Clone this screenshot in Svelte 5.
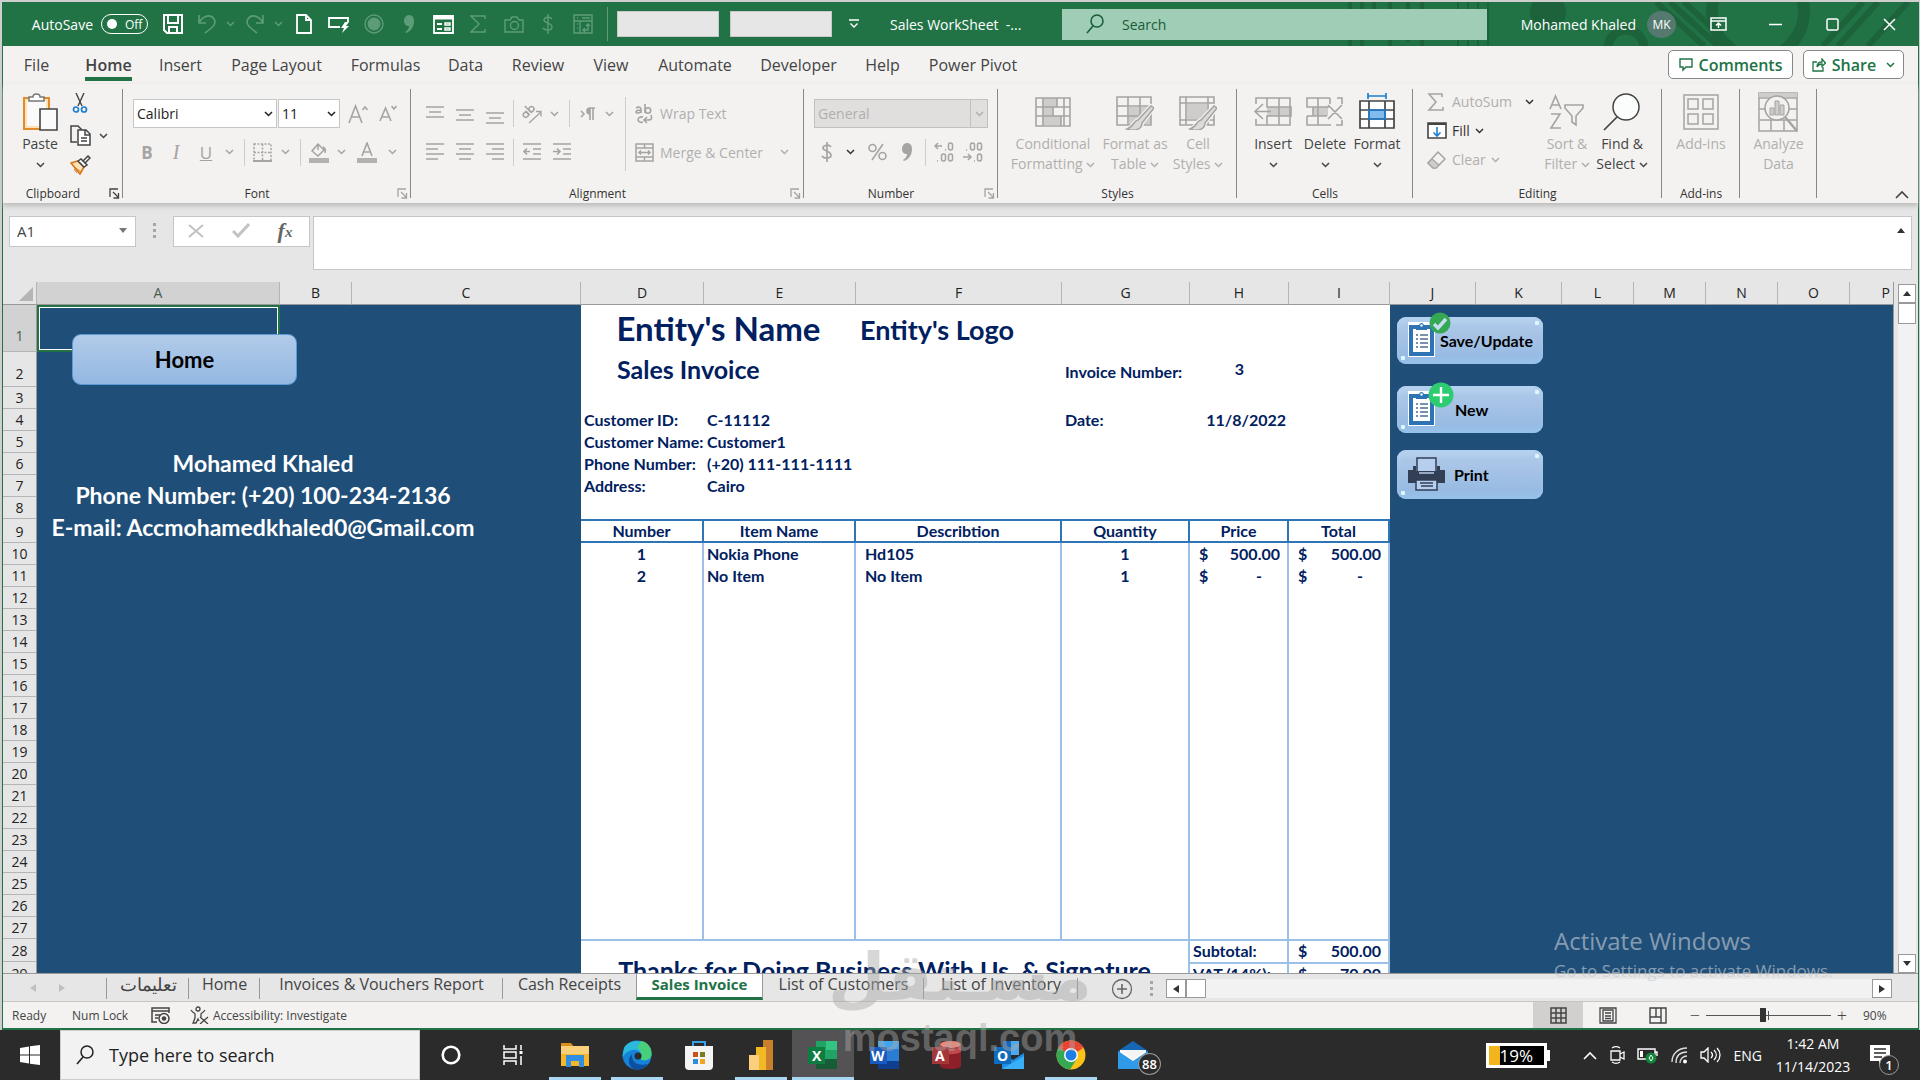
<script>
  const g = '#a6a4a2';
  const k = '#444';
  const w = '#fff';
  const dim = '#5d9c78';

  const icons = {
    save: [20, 20, `<g fill="none" stroke="${w}" stroke-width="2"><path d="M1 1h18v18H4l-3-3zM5 1v8h10V1M6 19v-6h8v6"/></g>`],
    undo: [18, 20, `<g fill="none" stroke="${dim}" stroke-width="1.6"><path d="M1 1v8h7M1 9C5 1 13 0 16 5s-1 8-9 14"/></g>`],
    redo: [18, 20, `<g fill="none" stroke="${dim}" stroke-width="1.6"><path d="M17 1v8h-7M17 9C13 1 5 0 2 5s1 8 9 14"/></g>`],
    page: [16, 20, `<path d="M1 1h9l5 5v13H1zM10 1v5h5" fill="none" stroke="${w}" stroke-width="1.8"/>`],
    touch: [22, 18, `<path d="M12 12H1V3h19v4" fill="none" stroke="${w}" stroke-width="1.8"/><path d="M17 7h4l-3 4h3l-7 7 2-5h-3z" fill="${w}"/>`],
    record: [20, 20, `<circle cx="10" cy="10" r="9" fill="none" stroke="${dim}" stroke-width="1.4"/><circle cx="10" cy="10" r="6.5" fill="${dim}"/>`],
    comma: [12, 18, `<path d="M6 0c3 0 5 2 5 6 0 6-3 10-8 12l-1-1c3-2 4-4 4-6-3 0-5-2-5-5s2-6 5-6z" fill="${dim}"/>`],
    form: [21, 19, `<path d="M1 1h19v17H1z" fill="none" stroke="${w}" stroke-width="1.8"/><path d="M1 3h19" stroke="${w}" stroke-width="3"/><path d="M4 9h5M4 14h5" stroke="${w}" stroke-width="2"/><path d="M12 8h5v2h-5zM12 13h5v2h-5z" fill="none" stroke="${w}" stroke-width="1.4"/>`],
    sigmaDim: [16, 18, `<path d="M15 4V1H1l8 8-8 8h14v-3" fill="none" stroke="${dim}" stroke-width="1.4"/>`],
    camera: [20, 17, `<path d="M1 4h5l2-3h5l2 3h4v12H1z" fill="none" stroke="${dim}" stroke-width="1.4"/><circle cx="10.500" cy="9.500" r="4" fill="none" stroke="${dim}" stroke-width="1.400"/>`],
    dollarDim: [12, 20, `<path d="M10 5C8 2 2 3 2 6s8 3 8 7-7 4-9 1M6 0v20" fill="none" stroke="${dim}" stroke-width="1.4"/>`],
    pivotDim: [20, 20, `<path d="M1 1h18v18H1zM7 7v12M1 7h18M4 4h1M4 10h1M4 14h1M9 4h8M15 10v6h-5M12 14l-2 2 2 2M13 12l2-2 2 2" fill="none" stroke="${dim}" stroke-width="1.4"/>`],
    qat: [10, 10, `<path d="M0 1h10M1.500 4.500L5 8l3.500-3.500" fill="none" stroke="${w}" stroke-width="1.4"/>`],
    loupe: [18, 20, `<circle cx="11" cy="7" r="6" fill="none" stroke="currentColor" stroke-width="1.5"/><path d="M7 12l-6 7" stroke="currentColor" stroke-width="1.6"/>`],
    ribbonMode: [17, 14, `<path d="M1 1h15v12H1zM1 4h15M8.500 11V6M6 8.500L8.500 6 11 8.500" fill="none" stroke="${w}" stroke-width="1.500"/>`],
    min: [13, 13, `<path d="M0 6.500h13" stroke="${w}" stroke-width="1.500"/>`],
    max: [13, 13, `<rect x="1" y="1" width="11" height="11" rx="1.500" fill="none" stroke="${w}" stroke-width="1.500"/>`],
    close: [13, 13, `<path d="M1 1l11 11M12 1L1 12" stroke="${w}" stroke-width="1.500"/>`],
    bubble: [14, 14, `<path d="M1 1h12v8H7l-3 3V9H1z" fill="none" stroke="#217346" stroke-width="1.400"/>`],
    share: [14, 14, `<path d="M5 4H1v9h10V9M5 9c0-4 2-5 5-5V1l3.500 4L10 8.500V6C8 6 6 7 5 9z" fill="none" stroke="#217346" stroke-width="1.300"/>`],
    paste: [36, 38, `<path d="M2 5h25v31H2z" fill="#fbe3b5" stroke="#e08b2c" stroke-width="2"/><path d="M5 8h19v25H5z" fill="#fafafa"/><path d="M7 8V4h4c0-4 7-4 7 0h4v4z" fill="#fff" stroke="#777" stroke-width="1.500"/><path d="M18 16h17v21H18z" fill="#fafafa" stroke="#444" stroke-width="1.600"/>`],
    cut: [16, 20, `<path d="M4 0l6 13M12 0L6 13" stroke="${k}" stroke-width="1.400"/><g fill="none" stroke="#1e7fd0" stroke-width="1.700"><circle cx="4" cy="16.500" r="2.500"/><circle cx="12" cy="16.500" r="2.500"/></g>`],
    copy: [21, 21, `<path d="M7 17H1V1h7l4 4" fill="none" stroke="${k}" stroke-width="1.500"/><path d="M8 5h8l4 4v11H8zM15 5v5h5M11 13h6M11 16h6" fill="#fff" stroke="${k}" stroke-width="1.500"/>`],
    painter: [21, 20, `<path d="M1 8l7-2 6 6-4 7z" fill="#fbe3b5" stroke="#d9791b" stroke-width="1.700"/><path d="M4 14l3 4M3 11l8 6" stroke="#d9791b"/><path d="M8 6l3-2 6 6-3 2zM13 6l5-5 2 2-5 5" fill="#fff" stroke="${k}" stroke-width="1.500"/>`],
    growA: [20, 20, `<path d="M1 19L7.500 2 14 19M3.500 13h8M14.500 6L17 3l2.500 3" fill="none" stroke="${g}" stroke-width="1.600"/>`],
    shrinkA: [18, 17, `<path d="M1 16L6.500 3 12 16M3 12h7M12.500 1L15 4l2.500-3" fill="none" stroke="${g}" stroke-width="1.600"/>`],
    borders: [19, 19, `<path d="M1 1h17v17H1zM9.500 1v17M1 9.500h17" fill="none" stroke="${g}" stroke-width="1.500" stroke-dasharray="2 1.500"/><path d="M0 18h19" stroke="${g}" stroke-width="2"/>`],
    fillc: [20, 21, `<path d="M9 2L3 9l6 5 6-6zM9 2v6M14 5c2 1 3 3 2 6" fill="none" stroke="${g}" stroke-width="1.500"/><path d="M0 16h20v5H0z" fill="#b3b1af"/>`],
    fontc: [20, 21, `<path d="M5 14L10 1l5 13M7 10h6" fill="none" stroke="${g}" stroke-width="1.600"/><path d="M0 16h20v5H0z" fill="#b3b1af"/>`],
    top: [18, 18, `<path d="M0 2h18M3 7h12M0 12h18" stroke="${g}" stroke-width="1.600"/>`],
    middle: [18, 18, `<path d="M0 5h18M3 10h12M0 15h18" stroke="${g}" stroke-width="1.600"/>`],
    bottom: [18, 22, `<path d="M0 10h18M3 15h12M0 20h18" stroke="${g}" stroke-width="1.600"/>`],
    left: [18, 18, `<path d="M0 1h18M0 6h12M0 11h18M0 16h12" stroke="${g}" stroke-width="1.600"/>`],
    center: [18, 18, `<path d="M0 1h18M3 6h12M0 11h18M3 16h12" stroke="${g}" stroke-width="1.600"/>`],
    right: [18, 18, `<path d="M0 1h18M6 6h12M0 11h18M6 16h12" stroke="${g}" stroke-width="1.600"/>`],
    outdent: [18, 18, `<path d="M0 1h18M10 6h8M10 11h8M0 16h18M7 8.500H1M4 5.500l-3 3 3 3" fill="none" stroke="${g}" stroke-width="1.600"/>`],
    indent: [18, 18, `<path d="M0 1h18M10 6h8M10 11h8M0 16h18M0 8.500h7M4 5.500l3 3-3 3" fill="none" stroke="${g}" stroke-width="1.600"/>`],
    orient: [20, 20, `<g transform="rotate(-45 7 9)" fill="none" stroke="${g}" stroke-width="1.500"><circle cx="3.500" cy="8" r="2.500"/><path d="M6 5v6M9 1v10"/><circle cx="11.500" cy="8" r="2.500"/></g><path d="M7 19L19 8M14 7.500h5v5" fill="none" stroke="${g}" stroke-width="1.300"/>`],
    para: [16, 14, `<path d="M1 4l3 3-3 3M10 13V1h5M13 1v12M10 7C6 7 6 1 10 1" fill="none" stroke="${g}" stroke-width="1.600"/><path d="M10 1v6C6 7 6 1 10 1z" fill="${g}"/>`],
    wrap: [18, 20, `<g fill="none" stroke="${g}" stroke-width="1.600"><path d="M1 4c4-2 5 0 5 1v4M6 6C0 6 0 9 3 9s3-2 3-3M10 0v9M8 18c-6 2-7-6 0-5"/><circle cx="13" cy="6.500" r="2.700"/><path d="M16 11c2 6-2 5-6 5M12 13l-3 3 3 3"/></g>`],
    merge: [19, 19, `<path d="M1 1h17v17H1zM1 5h17M1 14h17M9.500 1v4M9.500 14v4M4 9.500h11M6 7.500l-2 2 2 2M13 7.500l2 2-2 2" fill="none" stroke="${g}" stroke-width="1.500"/>`],
    dollar: [12, 20, `<path d="M10 5C8 2 2 3 2 6s8 3 8 7-7 4-9 1M6 0v20" fill="none" stroke="${g}" stroke-width="1.700"/>`],
    percent: [19, 18, `<g fill="none" stroke="${g}" stroke-width="1.600"><circle cx="4.500" cy="5" r="3.500"/><circle cx="14.500" cy="13" r="3.500"/><path d="M15 1L4 17"/></g>`],
    commaG: [12, 18, `<path d="M6 0c3 0 5 2 5 6 0 6-3 10-8 12l-1-1c3-2 4-4 4-6-3 0-5-2-5-5s2-6 5-6z" fill="${g}"/>`],
    incdec: [20, 20, `<g fill="none" stroke="${g}" stroke-width="1.500"><path d="M8 4H1M4 1L1 4l3 3M11 8h1"/><rect x="14.500" y="1" width="4" height="7" rx="2"/><path d="M3 19h1"/><rect x="7.500" y="12" width="4" height="7" rx="2"/><rect x="14.500" y="12" width="4" height="7" rx="2"/></g>`],
    decdec: [20, 20, `<g fill="none" stroke="${g}" stroke-width="1.500"><path d="M0 15h8M5 12l3 3-3 3M3 8h1M11 19h1"/><rect x="7.500" y="1" width="4" height="7" rx="2"/><rect x="14.500" y="1" width="4" height="7" rx="2"/><rect x="14.500" y="12" width="4" height="7" rx="2"/></g>`],
    cond: [36, 36, `<path d="M8 4h14v9H8zM8 13h10v9H8zM8 22h18v9H8z" fill="#cfcdcb"/><path d="M1 4h34v28H1zM8 4v28M29 4v28M1 13h34M1 22h34M8 13h14V4M18 13v9M8 22h18v10" fill="none" stroke="${g}" stroke-width="1.600"/>`],
    fmtTable: [38, 36, `<path d="M13 13h22v17H13z" fill="#cfcdcb"/><path d="M1 3h34v28H1zM1 12h34M1 22h34M12 3v28M24 3v28" fill="none" stroke="${g}" stroke-width="1.600"/><path d="M35 12L22 26c-5 1-4 7-11 9 8 3 15 0 15-6L38 14z" fill="#e8e6e4" stroke="#f3f2f1" stroke-width="4"/><path d="M35 12L22 26c-5 1-4 7-11 9 8 3 15 0 15-6L38 14z" fill="#dddbd9" stroke="${g}" stroke-width="1.500"/>`],
    cellStyle: [38, 36, `<path d="M8 10h20v15H8z" fill="#cfcdcb"/><path d="M1 3h34v28H1zM1 9h34M1 26h34M7 3v28M29 3v28" fill="none" stroke="${g}" stroke-width="1.600"/><path d="M35 12L22 26c-5 1-4 7-11 9 8 3 15 0 15-6L38 14z" fill="#e8e6e4" stroke="#f3f2f1" stroke-width="4"/><path d="M35 12L22 26c-5 1-4 7-11 9 8 3 15 0 15-6L38 14z" fill="#dddbd9" stroke="${g}" stroke-width="1.500"/>`],
    insertC: [40, 36, `<path d="M14 13h24v9H14z" fill="#cfcdcb"/><path d="M3 10V4h34v27H3v-6M14 4v9h24v9H14v9M26 4v27M14 31V22M14 9v4M10 10l-8 7.500 8 7.500M2 17.500h16" fill="none" stroke="${g}" stroke-width="1.600"/>`],
    deleteC: [38, 36, `<path d="M7 13h15v9H7z" fill="#cfcdcb"/><path d="M24 4H1v9h22M1 22h20M1 22v9h24M12 4v27M24 4v6M7 13v9M31 4h5v6M36 26v5h-6M22 11l14 14M36 11L22 25" fill="none" stroke="${g}" stroke-width="1.600"/>`],
    formatC: [36, 38, `<path d="M9 3h18M9 0v6M27 0v6" stroke="#1e7fd0" stroke-width="1.700"/><path d="M1 8h34v27H1z" fill="#fff"/><path d="M10 17h16v9H10z" fill="#83bbec"/><path d="M1 8h34v27H1zM1 17h34M1 26h34M10 8v27M26 8v27" fill="none" stroke="${k}" stroke-width="1.700"/><path d="M10 17h16v9H10z" fill="none" stroke="#1e7fd0" stroke-width="1.700"/>`],
    sigma: [17, 18, `<path d="M15 4V1H2l7 8-7 8h14v-3" fill="none" stroke="${g}" stroke-width="1.600"/>`],
    fill: [20, 17, `<path d="M1 1h18v15H1z" fill="#fff" stroke="${k}" stroke-width="1.600"/><path d="M1 2h18" stroke="${k}" stroke-width="2"/><path d="M10 5v9M6.500 10.500L10 14l3.500-3.500" fill="none" stroke="#1e7fd0" stroke-width="1.600"/>`],
    clear: [19, 18, `<path d="M11 1l7 7-9 9H6l-5-5z" fill="#f3f2f1" stroke="${g}" stroke-width="1.500"/><path d="M5 8l7 6-3 3H6l-5-5z" fill="#cfcdcb" stroke="${g}" stroke-width="1.200"/>`],
    sort: [36, 36, `<path d="M1 15L6.500 2 12 15M3 11h7M2 20h9L2 34h10M16 11h18v3l-7 8v9l-4-3v-6l-7-8z" fill="none" stroke="${g}" stroke-width="1.600"/>`],
    find: [38, 38, `<circle cx="23" cy="14" r="13" fill="#fbfdfd" stroke="${k}" stroke-width="1.500"/><path d="M14 24L1 37" stroke="${k}" stroke-width="1.700"/>`],
    addins: [36, 36, `<path d="M1 1h34v34H1zM5 5h10v10H5zM20 5h10v10H20zM5 20h10v10H5zM20 20h10v10H20z" fill="none" stroke="${g}" stroke-width="1.500"/>`],
    analyze: [40, 40, `<path d="M1 1h38v38H1zM1 6h38M1 17h38M1 28h38M13 28v11M26 28v11" fill="none" stroke="${g}" stroke-width="1.500"/><path d="M1 1h38v4H1z" fill="#cfcdcb"/><circle cx="19" cy="16" r="12" fill="#f3f2f1" stroke="${g}" stroke-width="1.600"/><path d="M12 16h4v7h-4zM17 9h4v14h-4zM22 13h4v10h-4z" fill="#cfcdcb" stroke="${g}"/><path d="M27 25l12 14" stroke="${g}" stroke-width="2.500"/>`],
    launch: [11, 11, `<path d="M1 9V1h8M4 4l5 5M9.500 5v5h-5" fill="none" stroke="currentColor" stroke-width="1.300"/>`],
    up: [14, 9, `<path d="M1 8l6-6 6 6" fill="none" stroke="currentColor" stroke-width="1.600"/>`],
    xmark: [16, 14, `<path d="M1 1l14 12M15 1L1 13" stroke="#c2c2c2" stroke-width="2"/>`],
    check: [18, 15, `<path d="M1 8l5 5L17 1" fill="none" stroke="#c2c2c2" stroke-width="3"/>`],
    clip: [27, 35, `<path d="M0 0h27v35H0z" fill="#fff"/><path d="M3 5h21v27H3z" fill="#fff" stroke="#2e74b5" stroke-width="4"/><path d="M8 8V4h3c0-4 5-4 5 0h3v4z" fill="#2e74b5"/><circle cx="13.500" cy="3.500" r="1.200" fill="#fff"/><path d="M8 13h2M8 17h2M8 21h2M8 25h2M12 13h8M12 17h8M12 21h8M12 25h8" stroke="#4c6f93" stroke-width="1.400"/>`],
    ok: [22, 22, `<circle cx="11" cy="11" r="10.500" fill="#34a853"/><path d="M5 12l4 4 8-9" fill="none" stroke="#c8dcf2" stroke-width="3.400"/>`],
    plus: [26, 26, `<circle cx="13" cy="13" r="12.500" fill="#2ecc71"/><path d="M13 5v16M5 13h16" stroke="#fff" stroke-width="2.400"/>`],
    printer: [37, 34, `<path d="M9 14V1h19v13" fill="#b7cfee" stroke="#333f54" stroke-width="1.500"/><path d="M5 9h3v5h21V9h3v4h5v13H0V13h5z" fill="#333f54"/><path d="M11 16h15" stroke="#b7cfee" stroke-width="1.500"/><path d="M8 23h21v10H8z" fill="#b7cfee" stroke="#333f54" stroke-width="1.500"/><path d="M12 26h13M13 29h12" stroke="#333f54" stroke-width="1.300"/>`],
    macro: [20, 17, `<path d="M6 15H1V1h17v5M1 4h17M4 8h5M4 11h3" fill="none" stroke="${k}" stroke-width="1.500"/><circle cx="13" cy="11.500" r="5" fill="none" stroke="${k}" stroke-width="1.500"/><circle cx="13" cy="11.500" r="2.300" fill="${k}"/>`],
    access: [19, 18, `<circle cx="8" cy="3" r="2" fill="none" stroke="${k}" stroke-width="1.300"/><path d="M1 4c2 3 4 3 4 4v4l-2 5h3l2-4 1 2M15 4c-2 3-4 3-4 4v3M10 11l8 7M18 11l-8 7" fill="none" stroke="${k}" stroke-width="1.300"/>`],
    grid: [17, 17, `<path d="M1 1h15v15H1zM1 6h15M1 11h15M6 1v15M11 1v15" fill="none" stroke="${k}" stroke-width="1.500"/>`],
    layout: [18, 17, `<path d="M1 1h16v15H1zM4 3h10v11H4zM6 6h6M6 9h6M6 11.500h6" fill="none" stroke="${k}" stroke-width="1.300"/>`],
    breaks: [18, 17, `<path d="M1 1h16v15H1zM1 10h11V1M7 1v9M12 10v6" fill="none" stroke="${k}" stroke-width="1.400"/>`],
    win: [20, 20, `<path d="M0 3l9-1.500V9.500H0zM10 1.300L20 0v9.500H10zM0 10.500h9v8L0 17zM10 10.500h10V20l-10-1.300z" fill="#fff"/>`],
    cortana: [20, 20, `<circle cx="10" cy="10" r="8.300" fill="none" stroke="#fff" stroke-width="2.600"/>`],
    tasks: [20, 20, `<path d="M1 0v4h12V0M1 20v-4h12v4M1 7h12v6H1zM18 0v5M18 11v9" fill="none" stroke="#fff" stroke-width="1.500"/><path d="M16.500 6h3v3h-3z" fill="#fff"/>`],
    folder: [30, 26, `<path d="M1 1h10l3 4h-13z" fill="#d98e1b"/><path d="M1 4h28v20H1z" fill="#fcd07a"/><path d="M1 12h28v12H1z" fill="#f7b628"/><path d="M6 13h18v12h-5v-6h-8v6H6z" fill="#2f8de4"/>`],
    edge: [30, 30, `<circle cx="15" cy="15" r="14.500" fill="#1583d8"/><path d="M2 8C7-2 29-2 29.500 14c0 5-5 7-9 6-3-1-1-2-1-4 0-4-5-7-9-6-5 1-8 4-10 7z" fill="#2cb8dc"/><path d="M19 1c7 1 11 7 10.500 13 0 5-5 7-9 6-3-1-1-2-1-4 0-5-4-9-4-9z" fill="#48cf7c"/><path d="M10 14c-1 7 5 13 16 10-4 5-10 6-14 5S4 20 10 14z" fill="#0c4fa0"/><circle cx="16" cy="16" r="3.500" fill="#2b2b2b"/>`],
    store: [28, 30, `<path d="M8 7V2h12v5" fill="none" stroke="#3a9fe8" stroke-width="2"/><path d="M0 6h28v20q0 4-4 4H4q-4 0-4-4z" fill="#f4f4f4"/><path d="M8 12h5v5H8z" fill="#c9531e"/><path d="M15 12h5v5h-5z" fill="#7a7c1f"/><path d="M8 19h5v5H8z" fill="#2a8fd8"/><path d="M15 19h5v5h-5z" fill="#f3a51c"/>`],
    pbi: [24, 30, `<path d="M14 0h10v30H14z" fill="#c9802d"/><path d="M7 7h10v23H7z" fill="#f2b826"/><path d="M0 15h10v15H0z" fill="#fbcf7b"/>`],
    excel: [30, 28, `<path d="M8 0h21v28H8z" fill="#21a366"/><path d="M18 0h11v9H18z" fill="#33c481"/><path d="M8 18h21v10H8z" fill="#185c37"/><path d="M0 6h17v17H0z" fill="#107c41"/><text x="4" y="20" font-family="Open Sans, sans-serif" font-weight="700" font-size="14" fill="#fff">X</text>`],
    word: [30, 28, `<path d="M8 0h21v28H8z" fill="#2b7cd3"/><path d="M8 0h21v8H8z" fill="#41a5ee"/><path d="M8 20h21v8H8z" fill="#103f91"/><path d="M0 6h17v17H0z" fill="#185abd"/><text x="1" y="20" font-family="Open Sans, sans-serif" font-weight="700" font-size="14" fill="#fff">W</text>`],
    acc: [30, 28, `<path d="M8 3c0-4 21-4 21 0v22c0 4-21 4-21 0z" fill="#8c1f28"/><ellipse cx="18.500" cy="3.500" rx="10.500" ry="3.500" fill="#e88a7a"/><path d="M8 5c5 4 16 4 21 0v6c-5 3-16 3-21 0z" fill="#c24a4f"/><path d="M0 6h17v17H0z" fill="#a4373a"/><text x="3" y="20" font-family="Open Sans, sans-serif" font-weight="700" font-size="14" fill="#fff">A</text>`],
    outlook: [30, 28, `<path d="M9 0h16v14H9z" fill="#50a8ec"/><path d="M9 0h8v14H9z" fill="#1568b8"/><path d="M8 12l11 7 11-7v16H8z" fill="#1f8fe5"/><path d="M8 28l22-13v13z" fill="#39b0f5"/><path d="M0 6h17v17H0z" fill="#0f6cbd"/><text x="3" y="20" font-family="Open Sans, sans-serif" font-weight="700" font-size="14" fill="#fff">O</text>`],
    chrome: [30, 30, `<circle cx="15" cy="15" r="14.500" fill="#fbc116"/><path d="M2.400 7.800A14.500 14.500 0 0 1 27.600 7.800L15 8z" fill="#ea4335"/><path d="M2.400 7.800A14.500 14.500 0 0 0 14 29.500L21 18.500 15 15z" fill="#34a853"/><path d="M2.400 7.800h25L21 12l-6 3z" fill="#ea4335"/><circle cx="15" cy="15" r="7" fill="#fff"/><circle cx="15" cy="15" r="5.500" fill="#1f7de6"/>`],
    mail: [30, 28, `<path d="M0 10L15 0l15 10v18H0z" fill="#1566b5"/><path d="M2 9h26v6L15 24 2 15z" fill="#fff"/><path d="M0 10l15 10 15-10v18H0z" fill="#2e9ae8"/><path d="M3 9h24L15 19z" fill="#f4f4f4"/>`],
    meet: [16, 18, `<path d="M2 5h9v9H2zM11 8l4-2v7l-4-2M3 2c3-2 5-2 8 0M3 16c3 2 5 2 8 0" fill="none" stroke="#fff" stroke-width="1.300"/>`],
    batt: [22, 18, `<path d="M1 3h17v10H1zM18 6h2v4" fill="none" stroke="#fff" stroke-width="1.400"/><path d="M3 5h3v6H3z" fill="#fff"/><circle cx="14" cy="12" r="5.500" fill="#12853c"/><path d="M14 9l2 3-2 3-2-3z" fill="none" stroke="#fff"/>`],
    wifi: [17, 17, `<g fill="none" stroke="#ddd" stroke-width="1.400"><path d="M1 15C1 7 7 1 16 1M5 16C5 9 9 5 16 5M9 16c0-4 3-7 7-7"/></g><circle cx="14" cy="14.500" r="2" fill="#fff"/>`],
    vol: [22, 16, `<path d="M1 5h3l4-4v14l-4-4H1zM11 5c2 2 2 4 0 6M14 3c3 3 3 7 0 10M17 1c4 4 4 10 0 14" fill="none" stroke="#fff" stroke-width="1.300"/>`],
    note: [22, 20, `<path d="M0 0h20v16h-6l-5 4v-4H0z" fill="#fff"/><path d="M4 4h12M4 8h12M4 12h8" stroke="#2b2b2b" stroke-width="1.300"/>`]
  };

  const menu = ['File', 'Home', 'Insert', 'Page Layout', 'Formulas', 'Data', 'Review', 'View', 'Automate', 'Developer', 'Help', 'Power Pivot'];
  const letters = 'ABCDEFGHIJKLMNOP'.split('');
  const details = {
    4: ['Customer ID:', 'C-11112'],
    5: ['Customer Name:', 'Customer1'],
    6: ['Phone Number:', '(+20) 111-111-1111'],
    7: ['Address:', 'Cairo']
  };
  const items = {
    10: ['1', 'Nokia Phone', 'Hd105', '1', '500.00'],
    11: ['2', 'No Item', 'No Item', '1', '-']
  };
  const totals = { 28: ['Subtotal:', '500.00'], 29: ['VAT (14%):', '70.00'] };
  const rows = Array.from({ length: 29 }, (_, i) => i + 1);
  const apps = [
    ['folder', 'File Explorer', true], ['edge', 'Microsoft Edge', true], ['store', 'Microsoft Store', false],
    ['pbi', 'Power BI', true], ['excel', 'Excel', true], ['word', 'Word', false], ['acc', 'Access', false],
    ['outlook', 'Outlook', false], ['chrome', 'Chrome', true], ['mail', 'Mail', false]
  ];
  let zoom = $state(90);
</script>

{#snippet icon(name)}
  <svg width={icons[name][0]} height={icons[name][1]} viewBox="0 0 {icons[name][0]} {icons[name][1]}" aria-hidden="true">{@html icons[name][2]}</svg>
{/snippet}

{#snippet chev()}
  <svg class="chev" width="9" height="6" viewBox="0 0 9 6" aria-hidden="true"><path d="M1 1l3.500 3.500L8 1" fill="none" stroke="currentColor" stroke-width="1.500" /></svg>
{/snippet}

{#snippet ib(name, label)}
  <button class="ib" aria-label={label}>{@render icon(name)}</button>
{/snippet}

{#snippet dd(label)}
  <button class="ib" aria-label={label}>{@render chev()}</button>
{/snippet}

{#snippet big(name, a, b, off, arrow)}
  <button class="big" class:off>
    <span class="pic">{@render icon(name)}</span>
    <span>{a}</span>
    <span>{b}{#if arrow}{b ? ' ' : ''}{@render chev()}{/if}</span>
  </button>
{/snippet}

{#snippet caption(text, launcher, dark)}
  <div class="caption">
    <span>{text}</span>
    {#if launcher}<button class="launcher" class:dark aria-label="{text} settings">{@render icon('launch')}</button>{/if}
  </div>
{/snippet}

<div class="screen">
  <div class="window">
    <header class="title">
      <svg class="deco" width="600" height="44" viewBox="0 0 600 44" aria-hidden="true">
        <g fill="none" stroke="#1c633b" stroke-width="6">
          <path d="M32 0v44M44 0v44M56 0v30M72 0v44M90 0v40M104 0v44" stroke-width="4" />
          <path d="M140 0v44M150 0v44M160 0v44M170 0v44" stroke-width="2" />
          <circle cx="308" cy="46" r="18" stroke-width="9" />
          <path d="M338 0l48 44M352 0l48 44M366 0l48 44" />
          <circle cx="440" cy="10" r="46" stroke-width="12" />
          <path d="M545 0l-40 44M560 0l-40 44M590 0l-40 44" />
        </g>
        <circle cx="230" cy="10" r="18" fill="#1c633b" />
      </svg>
      <div class="quick">
        <span class="as">AutoSave</span>
        <button class="toggle" role="switch" aria-checked="false" aria-label="AutoSave"><i></i>Off</button>
        {@render ib('save', 'Save')}
        {@render ib('undo', 'Undo')}
        <span class="dim">{@render dd('Undo list')}</span>
        {@render ib('redo', 'Redo')}
        <span class="dim">{@render dd('Redo list')}</span>
        {@render ib('page', 'New file')}
        {@render ib('touch', 'Quick action')}
        {@render ib('record', 'Record')}
        {@render ib('comma', 'Comma style')}
        {@render ib('form', 'Form')}
        {@render ib('sigmaDim', 'Sum')}
        {@render ib('camera', 'Camera')}
        {@render ib('dollarDim', 'Accounting')}
        {@render ib('pivotDim', 'Pivot table')}
        <i class="rule"></i>
        <input class="slot" aria-label="Quick field one" />
        <input class="slot" aria-label="Quick field two" />
        {@render ib('qat', 'Customize toolbar')}
      </div>
      <span class="doc">Sales WorkSheet&nbsp; -...</span>
      <label class="find">{@render icon('loupe')}<input placeholder="Search" aria-label="Search" /></label>
      <div class="user"><span>Mohamed Khaled</span><b>MK</b></div>
      <div class="sys">
        {@render ib('ribbonMode', 'Ribbon display')}
        {@render ib('min', 'Minimize')}
        {@render ib('max', 'Maximize')}
        {@render ib('close', 'Close')}
      </div>
    </header>

    <nav class="menu">
      <div class="tabs">
        {#each menu as m}<button class:on={m === 'Home'}>{m}</button>{/each}
      </div>
      <button class="pill comments">{@render icon('bubble')}Comments</button>
      <button class="pill share">{@render icon('share')}Share <span>{@render chev()}</span></button>
    </nav>

    <section class="ribbon">
      <div class="group">
        <div class="body clipb">
          {@render big('paste', 'Paste', '', false, true)}
          <div class="stack">
            {@render ib('cut', 'Cut')}
            <span class="pair">{@render ib('copy', 'Copy')}{@render dd('Copy options')}</span>
            {@render ib('painter', 'Format painter')}
          </div>
        </div>
        {@render caption('Clipboard', true, true)}
      </div>

      <div class="group">
        <div class="body two font">
          <div class="r1">
            <span class="combo"><select aria-label="Font name"><option>Calibri</option></select>{@render chev()}</span>
            <span class="combo"><select aria-label="Font size"><option>11</option></select>{@render chev()}</span>
            {@render ib('growA', 'Increase font')}
            {@render ib('shrinkA', 'Decrease font')}
          </div>
          <div class="r2">
            <button class="ib letter"><b>B</b></button>
            <button class="ib letter serif"><i>I</i></button>
            <button class="ib letter"><u>U</u></button>
            {@render dd('Underline options')}
            <i class="vr"></i>
            {@render ib('borders', 'Borders')}
            {@render dd('Border options')}
            <i class="vr"></i>
            {@render ib('fillc', 'Fill color')}
            {@render dd('Fill options')}
            {@render ib('fontc', 'Font color')}
            {@render dd('Font color options')}
          </div>
        </div>
        {@render caption('Font', true, false)}
      </div>

      <div class="group">
        <div class="body align">
          <div class="two">
            <div class="r1">
              {@render ib('top', 'Top align')}
              {@render ib('middle', 'Middle align')}
              {@render ib('bottom', 'Bottom align')}
              <i class="vr"></i>
              {@render ib('orient', 'Orientation')}
              {@render dd('Orientation options')}
              <i class="vr"></i>
              {@render ib('para', 'Text direction')}
              {@render dd('Direction options')}
            </div>
            <div class="r2">
              {@render ib('left', 'Align left')}
              {@render ib('center', 'Center')}
              {@render ib('right', 'Align right')}
              <i class="vr"></i>
              {@render ib('outdent', 'Decrease indent')}
              {@render ib('indent', 'Increase indent')}
            </div>
          </div>
          <div class="two wide">
            <button class="text">{@render icon('wrap')}<span>Wrap Text</span></button>
            <button class="text">{@render icon('merge')}<span>Merge &amp; Center</span>{@render chev()}</button>
          </div>
        </div>
        {@render caption('Alignment', true, false)}
      </div>

      <div class="group">
        <div class="body two number">
          <div class="r1">
            <span class="combo off"><select aria-label="Number format" disabled><option>General</option></select>{@render chev()}</span>
          </div>
          <div class="r2">
            {@render ib('dollar', 'Accounting format')}
            <span class="ink">{@render dd('Currency options')}</span>
            {@render ib('percent', 'Percent')}
            {@render ib('commaG', 'Comma')}
            <i class="vr"></i>
            {@render ib('incdec', 'Increase decimal')}
            {@render ib('decdec', 'Decrease decimal')}
          </div>
        </div>
        {@render caption('Number', true, false)}
      </div>

      <div class="group">
        <div class="body styles">
          {@render big('cond', 'Conditional', 'Formatting', true, true)}
          {@render big('fmtTable', 'Format as', 'Table', true, true)}
          {@render big('cellStyle', 'Cell', 'Styles', true, true)}
        </div>
        {@render caption('Styles', false, false)}
      </div>

      <div class="group">
        <div class="body cells">
          {@render big('insertC', 'Insert', '', false, true)}
          {@render big('deleteC', 'Delete', '', false, true)}
          {@render big('formatC', 'Format', '', false, true)}
        </div>
        {@render caption('Cells', false, false)}
      </div>

      <div class="group">
        <div class="body edit">
          <div class="list">
            <button class="text">{@render icon('sigma')}<span>AutoSum</span><em class="ink">{@render chev()}</em></button>
            <button class="text ink">{@render icon('fill')}<span>Fill</span>{@render chev()}</button>
            <button class="text">{@render icon('clear')}<span>Clear</span>{@render chev()}</button>
          </div>
          {@render big('sort', 'Sort &', 'Filter', true, true)}
          {@render big('find', 'Find &', 'Select', false, true)}
        </div>
        {@render caption('Editing', false, false)}
      </div>

      <div class="group">
        <div class="body one">{@render big('addins', 'Add-ins', '', true, false)}</div>
        {@render caption('Add-ins', false, false)}
      </div>

      <div class="group">
        <div class="body one">{@render big('analyze', 'Analyze', 'Data', true, false)}</div>
        {@render caption('', false, false)}
      </div>

      <button class="collapse" aria-label="Collapse ribbon">{@render icon('up')}</button>
    </section>

    <section class="formula">
      <label class="name"><input value="A1" aria-label="Name box" /><i class="tri down"></i></label>
      <i class="dots"><b></b><b></b><b></b></i>
      <div class="fx">
        {@render ib('xmark', 'Cancel')}
        {@render ib('check', 'Enter')}
        <button class="ib fn" aria-label="Insert function"><i>f</i><small>x</small></button>
      </div>
      <textarea aria-label="Formula bar"></textarea>
      <button class="expand" aria-label="Expand formula bar"><i class="tri up"></i></button>
    </section>

    <main class="work">
      <div class="sheet">
        <table>
          <colgroup>
            <col class="c0" /><col class="cA" /><col class="cB" /><col class="cC" /><col class="cD" /><col class="cE" /><col class="cF" />
            <col class="cG" /><col class="cH" /><col class="cI" /><col class="cJ" /><col class="cJ" /><col class="cL" /><col class="cL" />
            <col class="cL" /><col class="cL" /><col />
          </colgroup>
          <thead>
            <tr>
              <th class="corner"><i></i></th>
              {#each letters as l}<th class:sel={l === 'A'} class:last={l === 'P'}>{l}</th>{/each}
            </tr>
          </thead>
          <tbody>
            {#each rows as r}
              <tr class="row{r}">
                <th class:sel={r === 1}>{r}</th>
                <td class="navy" class:active={r === 1}></td>
                <td class="navy" colspan="2"></td>
                {#if r === 1}
                  <td colspan="2" class="mid entity">Entity's Name</td>
                  <td class="logo">Entity's Logo</td>
                  <td></td><td></td><td></td>
                {:else if r === 2}
                  <td colspan="2" class="invoice">Sales Invoice</td>
                  <td></td>
                  <td class="low">Invoice Number:</td>
                  <td class="mid">3</td>
                  <td></td>
                {:else if details[r]}
                  <td>{details[r][0]}</td>
                  <td>{details[r][1]}</td>
                  <td></td>
                  <td>{r === 4 ? 'Date:' : ''}</td>
                  <td class="date">{r === 4 ? '11/8/2022' : ''}</td>
                  <td></td>
                {:else if r === 9}
                  {#each ['Number', 'Item Name', 'Describtion', 'Quantity', 'Price', 'Total'] as h}<td class="head">{h}</td>{/each}
                {:else if r >= 10 && r <= 27}
                  {@const it = items[r] ?? ['', '', '', '', '']}
                  <td class="cell mid">{it[0]}</td>
                  <td class="cell">{it[1]}</td>
                  <td class="cell pad">{it[2]}</td>
                  <td class="cell mid">{it[3]}</td>
                  {#each [0, 1] as n}
                    <td class="cell">{#if it[4]}<div class="money" class:dash={it[4] === '-'}><span>$</span><span>{it[4]}</span></div>{/if}</td>
                  {/each}
                {:else if r >= 28}
                  {#if r === 28}<td class="thanks" colspan="4" rowspan="2">Thanks for Doing Business With Us&nbsp; &amp; Signature</td>{/if}
                  <td class="cell line">{totals[r][0]}</td>
                  <td class="cell line"><div class="money"><span>$</span><span>{totals[r][1]}</span></div></td>
                {:else}
                  <td></td><td></td><td></td><td></td><td></td><td></td>
                {/if}
                <td class="navy" colspan="7"></td>
              </tr>
            {/each}
          </tbody>
        </table>

        <button class="shape home">Home</button>
        <div class="contact">
          <p>Mohamed Khaled</p>
          <p>Phone Number: (+20) 100-234-2136</p>
          <p>E-mail: Accmohamedkhaled0@Gmail.com</p>
        </div>
        <div class="actions">
          <button class="shape glass"><span class="art">{@render icon('clip')}<span class="badge">{@render icon('ok')}</span></span>Save/Update</button>
          <button class="shape glass new"><span class="art">{@render icon('clip')}<span class="badge">{@render icon('plus')}</span></span>New</button>
          <button class="shape glass print"><span class="art">{@render icon('printer')}</span>Print</button>
        </div>
      </div>
      <div class="vscroll">
        <button aria-label="Scroll up"><i class="tri up"></i></button>
        <span class="thumb"></span>
        <span class="track"></span>
        <button aria-label="Scroll down"><i class="tri down"></i></button>
      </div>
    </main>

    <nav class="sheets">
      <div class="arrows"><i class="tri lft"></i><i class="tri rgt"></i></div>
      <button lang="ar" class="ar">تعليمات</button>
      <button>Home</button>
      <button>Invoices &amp; Vouchers Report</button>
      <button>Cash Receipts</button>
      <button class="cur">Sales Invoice</button>
      <button>List of Customers</button>
      <button>List of Inventory</button>
      <button class="add" aria-label="New sheet"><svg width="22" height="22" viewBox="0 0 22 22"><circle cx="11" cy="11" r="9.500" fill="none" stroke="#666" stroke-width="1.300" /><path d="M11 6v10M6 11h10" stroke="#666" stroke-width="1.600" /></svg></button>
      <i class="dots"><b></b><b></b><b></b></i>
      <div class="hscroll">
        <button aria-label="Scroll left"><i class="tri lft"></i></button>
        <span class="thumb"></span>
        <span class="track"></span>
        <button aria-label="Scroll right"><i class="tri rgt"></i></button>
      </div>
    </nav>

    <footer class="status">
      <span class="s1">Ready</span>
      <span class="s2">Num Lock</span>
      <span class="s3">{@render icon('macro')}</span>
      <span class="s4">{@render icon('access')}Accessibility: Investigate</span>
      <div class="views">
        <button class="on" aria-label="Normal view">{@render icon('grid')}</button>
        <button aria-label="Page layout view">{@render icon('layout')}</button>
        <button aria-label="Page break view">{@render icon('breaks')}</button>
      </div>
      <button class="z" aria-label="Zoom out">−</button>
      <input type="range" min="0" max="198" bind:value={zoom} aria-label="Zoom" />
      <button class="z" aria-label="Zoom in">+</button>
      <span class="pct">90%</span>
    </footer>
  </div>

  <footer class="taskbar">
    <button class="start" aria-label="Start">{@render icon('win')}</button>
    <label class="tsearch">{@render icon('loupe')}<input placeholder="Type here to search" aria-label="Search Windows" /></label>
    <button class="app" aria-label="Cortana">{@render icon('cortana')}</button>
    <button class="app" aria-label="Task view">{@render icon('tasks')}</button>
    {#each apps as [name, label, open]}
      <button class="app" class:open class:front={name === 'excel'} aria-label={label}>{@render icon(name)}{#if name === 'mail'}<b class="count">88</b>{/if}</button>
    {/each}
    <div class="tray">
      <span class="power"><i></i><span>19%</span></span>
      <span class="t1">{@render icon('up')}</span>
      {@render icon('meet')}
      {@render icon('batt')}
      {@render icon('wifi')}
      {@render icon('vol')}
      <span class="lang">ENG</span>
      <span class="clock"><span>1:42 AM</span><span>11/14/2023</span></span>
      <span class="bell">{@render icon('note')}<b class="count">1</b></span>
    </div>
  </footer>

  <div class="activate"><p>Activate Windows</p><p>Go to Settings to activate Windows.</p></div>
  <div class="mark"><span lang="ar">مسـتقل</span><span>mostaql.com</span></div>
</div>

<style>
  :global(body) { margin: 0; background: #cfcfcf; overflow: hidden; }
  * { box-sizing: border-box; }
  .screen { position: relative; display: flex; flex-direction: column; height: 100vh; font-family: 'Open Sans', 'Noto Sans', sans-serif; font-size: 15px; color: #444; }
  button, input, select, textarea { font: inherit; color: inherit; margin: 0; padding: 0; border: 0; background: none; border-radius: 0; outline: 0; }
  svg { display: block; flex: none; }
  p { margin: 0; }
  .window { flex: 1; min-height: 0; display: flex; flex-direction: column; margin: 2px 1px 0 2px; border: 1px solid #217346; border-top: 0; border-bottom-width: 2px; background: #e6e6e6; }
  .ib { display: flex; align-items: center; justify-content: center; height: 100%; }

  .title { position: relative; display: flex; align-items: center; height: 44px; flex: none; background: #217346; color: #fff; font-size: 14px; }
  .deco { position: absolute; right: 0; top: 0; }
  .quick { display: grid; grid-template-columns: 90px 63px 34px 34px 12px 38px 8px 44px 26px 44px 26px 42px 28px 44px 24px 46px 2px 111px 113px 44px; align-items: center; height: 100%; justify-items: center; }
  .as { justify-self: end; }
  .toggle { display: flex; align-items: center; gap: 8px; width: 47px; height: 20px; padding-left: 5px; border: 1px solid #fff; border-radius: 10px; font-size: 12px; }
  .toggle i { width: 10px; height: 10px; border-radius: 50%; background: #fff; }
  .dim { color: #5d9c78; }
  .rule { width: 1px; height: 34px; background: #5d9c78; }
  .slot { width: 102px; height: 26px; background: #e6e6e6; border: 1px solid #c9c9c9; justify-self: end; }
  .doc { width: 186px; padding-left: 14px; white-space: nowrap; z-index: 1; }
  .find { position: relative; display: flex; align-items: center; gap: 18px; flex: 0 1 425px; height: 31px; padding-left: 24px; background: #a0cdb5; color: #185c37; }
  .find input { flex: 1; min-width: 0; }
  input::placeholder { color: inherit; opacity: 1; }
  .user { position: relative; display: flex; align-items: center; gap: 11px; margin-left: auto; white-space: nowrap; }
  .user b { display: grid; place-items: center; width: 29px; height: 27px; border-radius: 50%; background: #55796f; font-weight: 400; font-size: 12px; }
  .sys { position: relative; display: grid; grid-template-columns: 57px 57px 57px 57px; height: 100%; margin-left: 14px; }

  .menu { display: flex; height: 38px; flex: none; background: #f3f2f1; font-size: 16px; }
  .tabs { display: grid; grid-template-columns: 67px 77px 67px 125px 93px 67px 78px 68px 100px 107px 61px 120px; flex: 1; }
  .tabs button { position: relative; white-space: nowrap; }
  .tabs .on { font-weight: 600; }
  .tabs .on::after { content: ''; position: absolute; left: 15px; right: 15px; bottom: 3px; height: 4px; background: #217346; }
  .pill { display: flex; align-items: center; justify-content: center; gap: 6px; height: 29px; margin: 4px 0 0 10px; border: 1px solid #8a8886; border-radius: 5px; background: #fff; color: #217346; font-weight: 600; font-size: 16px; }
  .comments { width: 125px; }
  .share { width: 101px; margin-right: 14px; }
  .pill span { padding-left: 4px; }

  .ribbon { display: grid; grid-template-columns: 120px 288px 393px 194px 239px 176px 249px 78px 77px 1fr; height: 119px; flex: none; background: #f3f2f1; box-shadow: 0 3px 5px #bbb; font-size: 14px; z-index: 1; }
  .group { display: flex; flex-direction: column; padding-top: 1px; background: linear-gradient(#8a8886, #8a8886) right 5px / 1px 109px no-repeat; }
  .body { flex: 1; display: flex; min-height: 0; }
  .caption { position: relative; height: 19px; line-height: 19px; text-align: center; font-size: 12px; color: #333; padding-right: 20px; }
  .caption:not(:has(.launcher)) { padding-right: 0; }
  .launcher { position: absolute; right: 3px; top: 4px; color: #a6a4a2; }
  .launcher.dark { color: #444; }
  .big { display: flex; flex-direction: column; align-items: center; padding-top: 7px; line-height: 20px; white-space: nowrap; }
  .big .pic { display: flex; align-items: center; height: 40px; margin-bottom: 2px; }
  .big .chev { display: inline-block; vertical-align: middle; }
  .big.off { color: #b1afad; }
  .chev { color: inherit; }
  .clipb { padding-left: 13px; }
  .clipb .big { width: 48px; }
  .clipb .stack { display: grid; grid-template-rows: 36px 29px 30px; justify-items: start; padding-left: 6px; }
  .clipb .stack > .ib:first-child { width: 20px; }
  .pair { display: flex; gap: 8px; height: 29px; }
  .two { display: grid; grid-template-rows: 29px 28px; row-gap: 10px; padding-top: 14px; align-content: start; color: #a6a4a2; }
  .r1, .r2 { display: grid; align-items: center; height: 100%; }
  .vr { width: 1px; height: 27px; background: #cfcdcb; justify-self: center; }
  .font { padding-left: 10px; }
  .font .r1 { grid-template-columns: 144px 62px 34px 24px; column-gap: 1px; }
  .font .r2 { grid-template-columns: 28px 30px 30px 16px 14px 22px 24px 6px 32px 12px 40px 10px; }
  .combo { position: relative; display: flex; align-items: center; height: 29px; border: 1px solid #c8c6c4; background: #fff; color: #222; }
  .combo select { appearance: none; width: 100%; height: 100%; padding-left: 3px; opacity: 1; }
  .combo .chev { position: absolute; right: 3px; }
  .combo.off { background: #e1dfdd; border-color: #c3c1bf; color: #b1afad; background-image: linear-gradient(#c3c1bf, #c3c1bf); background-size: 1px 100%; background-position: right 16px top; background-repeat: no-repeat; }
  .letter { font-size: 17px; }
  .serif { font-family: 'Liberation Serif', serif; font-size: 20px; }
  .align { position: relative; }
  .align .two:first-child { width: 214px; padding-left: 9px; }
  .align .r1 { grid-template-columns: 30px 30px 30px 6px 32px 12px 18px 20px 22px; }
  .align .r2 { grid-template-columns: 30px 30px 30px 6px 32px 28px; }
  .wide { padding-left: 10px; background: linear-gradient(#cfcdcb, #cfcdcb) left 12px / 1px 74px no-repeat; }
  .text { display: grid; grid-template-columns: 20px auto auto 1fr; gap: 5px; align-items: center; justify-items: start; color: #b1afad; white-space: nowrap; }
  .wide .text { grid-template-columns: 20px auto 1fr; }
  .wide .chev { margin-left: 12px; }
  .number { padding-left: 10px; }
  .number .r1 { width: 174px; }
  .number .r2 { grid-template-columns: 26px 20px 34px 26px 10px 27px 32px; }
  .ink, .text.ink { color: #333; }
  .number .ink { display: flex; justify-content: center; }
  .styles { display: grid; grid-template-columns: 94px 70px 56px; padding-left: 8px; }
  .cells { display: grid; grid-template-columns: 52px 52px 52px; padding-left: 10px; }
  .edit { display: grid; grid-template-columns: 112px 56px 54px; padding-left: 14px; }
  .list { display: grid; grid-template-rows: 29px 29px 29px; padding-top: 2px; }
  .text em { padding-left: 8px; }
  .one { justify-content: center; }
  .collapse { justify-self: end; align-self: end; margin: 0 9px 4px 0; }

  .formula { display: flex; height: 79px; padding: 13px 6px 13px 6px; flex: none; }
  .name { display: flex; align-items: center; width: 127px; height: 31px; padding: 0 8px 2px 7px; border: 1px solid #c6c6c6; background: #fff; }
  .name input { flex: 1; min-width: 0; }
  .tri { display: block; width: 0; height: 0; border: 4px solid transparent; }
  .tri.down { border-top: 5px solid #333; border-bottom: 0; }
  .tri.up { border-bottom: 5px solid #333; border-top: 0; }
  .tri.lft { border-right: 6px solid #333; border-left: 0; }
  .tri.rgt { border-left: 6px solid #333; border-right: 0; }
  .name .tri { border-top-color: #777; }
  .dots { display: grid; gap: 3px; align-content: center; justify-content: center; width: 37px; height: 29px; }
  .dots b { width: 3px; height: 3px; background: #a6a6a6; }
  .fx { display: grid; grid-template-columns: 44px 46px 42px; width: 137px; height: 31px; padding-bottom: 2px; border: 1px solid #c6c6c6; background: #fff; }
  .fn { font-family: 'Liberation Serif', serif; font-size: 22px; color: #666; font-style: italic; font-weight: 700; }
  .fn small { font-size: 15px; padding-top: 4px; }
  .formula textarea { flex: 1; margin-left: 3px; border: 1px solid #c6c6c6; border-right: 0; background: #fff; resize: none; height: 54px; }
  .expand { width: 21px; height: 54px; padding: 11px 0 0 6px; border: 1px solid #c6c6c6; border-left: 0; background: #fff; display: flex; align-items: start; }

  .work { flex: 1; min-height: 0; display: flex; border-bottom: 1px solid #999; }
  .sheet { position: relative; flex: 1; min-width: 0; overflow: hidden; font-family: Lato, 'Open Sans', sans-serif; }
  table { width: 100%; table-layout: fixed; border-collapse: separate; border-spacing: 0; color: #002060; font-weight: 700; font-size: 16px; line-height: 20px; }
  .c0 { width: 34px; } .cA { width: 243px; } .cB { width: 72px; } .cC { width: 229px; } .cD { width: 123px; } .cE { width: 152px; } .cF { width: 206px; }
  .cG { width: 128px; } .cH { width: 99px; } .cI { width: 101px; } .cJ { width: 86px; } .cL { width: 72px; }
  th { font-family: 'Open Sans', sans-serif; font-weight: 400; font-size: 14px; color: #222; padding: 0; background: #e6e6e6; }
  thead th { height: 23px; line-height: 18px; border-right: 1px solid #b5b5b5; border-bottom: 1px solid #999; }
  thead th.last { text-align: right; padding-right: 3px; border-right: 0; }
  .corner { text-align: right; }
  .corner i { display: block; width: 0; height: 0; margin: 2px 3px 0 auto; border: 7px solid #b5b5b5; border-left-color: transparent; border-top-color: transparent; }
  tbody th { border-right: 1px solid #999; border-bottom: 1px solid #b5b5b5; vertical-align: bottom; }
  th.sel { background: #d2d2d2; color: #44604e; }
  td { padding: 0 3px 1px; background: #fff; white-space: nowrap; vertical-align: bottom; }
  tr { height: 22px; }
  .row1 { height: 47px; } .row2 { height: 35px; } .row9 { height: 24px; } .row28 { height: 23px; }
  .row1 th { padding-bottom: 5px; }
  .row2 th { padding-bottom: 2px; }
  td.navy { background: #1f4e78; }
  td.active { border: 2px solid #217346; box-shadow: inset 0 0 0 1px #fff; }
  .mid { text-align: center; }
  .row1 td { vertical-align: middle; }
  .entity { font-size: 33px; line-height: 40px; }
  .logo { font-size: 27px; line-height: 30px; padding: 3px 0 0 4px; }
  .invoice { font-size: 25px; line-height: 30px; padding-left: 36px; vertical-align: middle; }
  .row2 .mid { vertical-align: middle; }
  .low { padding-bottom: 5px; }
  .date { text-align: right; }
  td.head { text-align: center; vertical-align: middle; border: 2px solid #2e75b6; border-left-width: 0; line-height: 18px; padding-bottom: 0; }
  td.cell { border-right: 2px solid #9bc2e6; }
  .pad { padding-left: 9px; }
  .money { display: flex; justify-content: space-between; padding: 0 4px 0 6px; }
  .dash { padding-right: 22px; }
  .row28 td:not(.navy), .row29 td.line { border-top: 2px solid #9bc2e6; }
  td.line { line-height: 18px; vertical-align: middle; }
  td.thanks { font-size: 25px; line-height: 30px; text-align: center; vertical-align: bottom; border-right: 2px solid #9bc2e6; padding: 0; }
  .row28, .row29 { height: 23px; }

  .shape { font-family: Lato, 'Open Sans', sans-serif; font-weight: 700; color: #000; border-radius: 9px; background: linear-gradient(#b1cbe9, #a3c1e5 50%, #92b8e2); }
  .home { position: absolute; left: 69px; top: 52px; width: 225px; height: 51px; border: 1px solid #5b9bd5; font-size: 22px; }
  .contact { position: absolute; left: 34px; top: 165px; width: 452px; color: #fff; font-weight: 700; font-size: 23px; line-height: 32px; text-align: center; white-space: nowrap; }
  .actions { position: absolute; left: 1394px; top: 35px; display: grid; grid-template-rows: 47px 47px 49px; row-gap: 22px; width: 146px; }
  .glass { position: relative; display: flex; align-items: center; font-size: 16px; box-shadow: inset 0 8px 4px -2px #b4d0ee, inset 0 -8px 4px -2px #98c1e8; }
  .glass::before, .glass::after { content: ''; position: absolute; width: 4px; height: 4px; border-radius: 1px; background: #dff6ff; }
  .glass::before { right: 4px; top: 4px; }
  .glass::after { left: 4px; bottom: 4px; }
  .art { position: relative; display: block; align-self: start; width: 32px; margin: 5px 0 0 11px; }
  .badge { position: absolute; left: 21px; top: -10px; }
  .new .art { width: 47px; }
  .new .badge { top: -9px; left: 20px; }
  .print { margin-top: -5px; height: 49px; }
  .print .art { width: 46px; margin-top: 7px; }

  .vscroll { display: flex; flex-direction: column; width: 25px; flex: none; padding: 2px 2px 0 4px; align-items: stretch; background: #e6e6e6; border-left: 1px solid #999; }
  .vscroll button, .hscroll button { display: grid; place-items: center; border: 1px solid #999; background: #fff; flex: none; }
  .vscroll button { height: 19px; }
  .vscroll .thumb { height: 21px; border: 1px solid #999; background: #fff; }
  .track { flex: 1; background: #f2f2f2; }

  .sheets { display: flex; height: 28px; flex: none; border-bottom: 1px solid #c6c6c6; font-size: 16px; color: #444; }
  .sheets > button { position: relative; height: 26px; line-height: 20px; padding: 0 0 6px; white-space: nowrap; background: linear-gradient(#999, #999) right 4px / 1px 21px no-repeat; flex: none; }
  .arrows { display: flex; gap: 23px; width: 104px; padding: 10px 0 0 27px; background: linear-gradient(#999, #999) right 4px / 1px 21px no-repeat; }
  .arrows .tri.lft { border-right-color: #c0c0c0; }
  .arrows .tri.rgt { border-left-color: #c0c0c0; }
  .sheets > .ar { width: 82px; font-size: 18px; }
  .sheets > button:nth-of-type(2) { width: 71px; }
  .sheets > button:nth-of-type(3) { width: 243px; }
  .sheets > button:nth-of-type(4) { width: 133px; background: none; }
  .sheets > .cur { width: 127px; padding: 0 0 3px; background: #fff; color: #217346; font-weight: 700; border-bottom: 3px solid #217346; border-left: 1px solid #999; border-right: 1px solid #999; font-size: 15px; }
  .sheets > button:nth-of-type(6) { width: 161px; }
  .sheets > button:nth-of-type(7) { width: 154px; }
  .sheets > .add { width: 88px; padding: 4px 0 0 33px; background: none; }
  .sheets .dots { width: 0; margin: 0 15px 0 -15px; }
  .hscroll { display: flex; flex: 1; min-width: 0; height: 19px; margin: 5px 26px 0 0; }
  .hscroll button { width: 20px; }
  .hscroll .thumb { width: 20px; border: 1px solid #999; background: #fff; }

  .status { display: flex; align-items: center; height: 26px; flex: none; background: #f3f2f1; font-size: 12px; white-space: nowrap; }
  .s1 { width: 69px; padding-left: 9px; }
  .s2 { width: 79px; }
  .s3 { width: 39px; }
  .s4 { display: flex; align-items: center; gap: 4px; }
  .views { display: flex; height: 100%; margin-left: auto; }
  .views button { display: grid; place-items: center; width: 50px; }
  .views .on { background: #d2d0ce; }
  .z { width: 22px; font-size: 18px; font-weight: 300; }
  .views + .z { margin-left: 1px; }
  .status input { appearance: none; width: 125px; height: 20px; background: linear-gradient(#555, #555) center / 100% 1px no-repeat, linear-gradient(#555, #555) center / 1px 9px no-repeat; }
  .status input::-webkit-slider-thumb { appearance: none; width: 6px; height: 14px; background: #333; }
  .pct { width: 65px; padding-left: 10px; }

  .taskbar { display: flex; height: 50px; flex: none; background: #2b2b2b; color: #fff; }
  .start { display: grid; place-items: center; width: 60px; }
  .tsearch { display: flex; align-items: center; gap: 15px; width: 360px; padding-left: 15px; background: #f2f2f2; border: 1px solid #ccc; color: #222; font-size: 18px; }
  .tsearch input { flex: 1; min-width: 0; }
  .app { position: relative; display: grid; place-items: center; width: 62px; }
  .front { background: #545254; }
  .open::after { content: ''; position: absolute; bottom: 0; left: 5px; right: 5px; height: 3px; background: #a9d7f3; }
  .front::after { left: 0; right: 0; }
  .count { position: absolute; display: grid; place-items: center; border: 1px solid #999; border-radius: 50%; background: #2b2b2b; font-size: 13px; font-weight: 600; }
  .app .count { right: 3px; bottom: 5px; width: 23px; height: 22px; }
  .tray { display: flex; align-items: center; gap: 12px; margin-left: auto; font-size: 15px; padding-right: 14px; }
  .power { position: relative; display: flex; width: 61px; height: 25px; margin-right: 24px; border: 3px solid #fff; background: #000; font-size: 17px; line-height: 19px; }
  .power i { width: 11px; height: 100%; background: #f3b51c; }
  .power::after { content: ''; position: absolute; right: -6px; top: 4px; width: 3px; height: 11px; background: #fff; }
  .lang { font-size: 14px; }
  .clock { display: grid; line-height: 23px; text-align: center; font-size: 14px; width: 78px; }
  .bell { position: relative; width: 36px; margin-left: 6px; }
  .bell .count { left: 9px; top: 10px; width: 20px; height: 20px; }

  .activate { position: absolute; right: 82px; bottom: 97px; width: 284px; color: #c4ccd4; opacity: 0.62; font-size: 17px; line-height: 24px; white-space: nowrap; pointer-events: none; }
  .activate p:first-child { font-size: 24px; line-height: 36px; }
  .mark { position: absolute; left: 845px; bottom: 24px; width: 230px; display: grid; grid-template-columns: 230px; justify-items: center; color: #a8a8a8; opacity: 0.45; font-family: 'Liberation Sans', sans-serif; font-weight: 700; font-size: 38px; line-height: 36px; white-space: nowrap; pointer-events: none; }
  .mark span:first-child { font-family: 'DejaVu Sans', sans-serif; font-size: 66px; line-height: 84px; }
</style>
